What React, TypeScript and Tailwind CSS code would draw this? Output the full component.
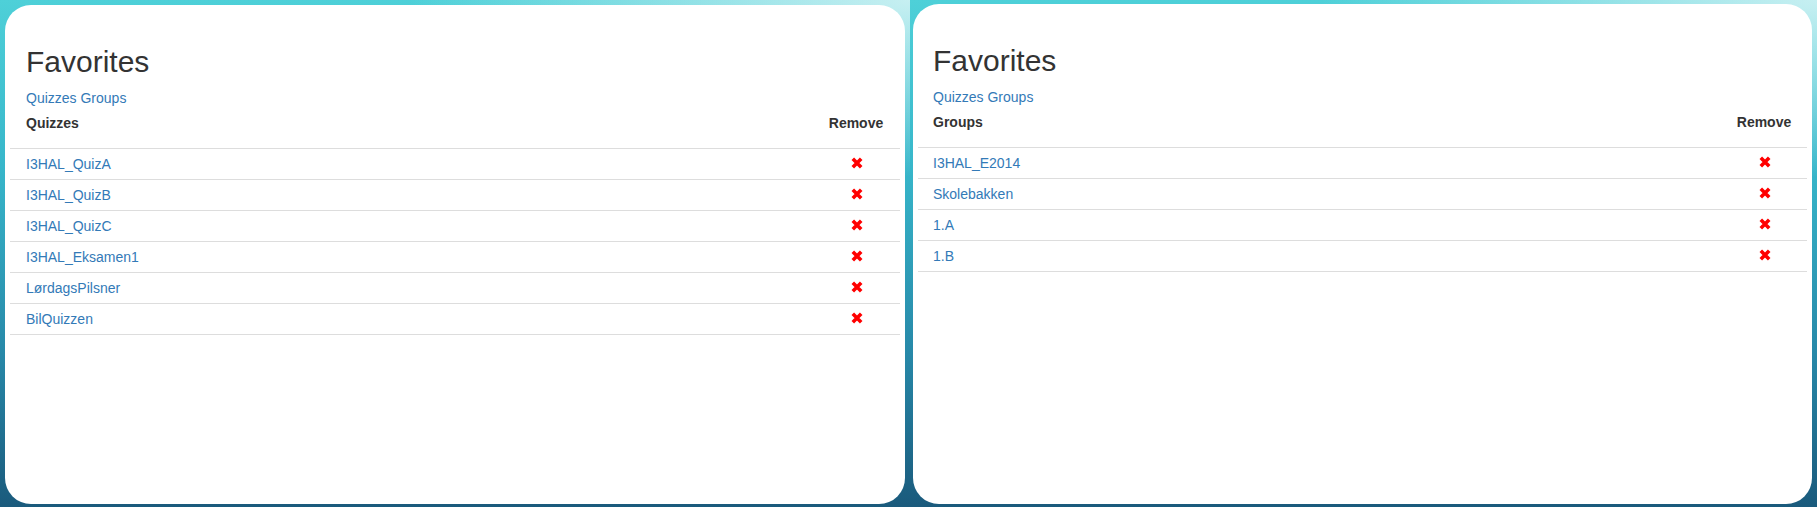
import React from "react";

const bgClass =
  "bg-[radial-gradient(ellipse_55%_35%_at_100%_0%,rgba(205,241,243,0.95)_0%,rgba(205,241,243,0)_100%),linear-gradient(to_bottom,#4ed0d8_0%,#37b6ca_33%,#2788a8_70%,#1a5a7c_100%)]";

function RemoveIcon() {
  return (
    <svg width="12" height="12" viewBox="0 0 12 12" className="block">
      <path d="M1.8 1.8 L10.2 10.2 M10.2 1.8 L1.8 10.2" stroke="#ff0000" strokeWidth="3.6" strokeLinecap="butt" fill="none" />
    </svg>
  );
}

type PanelProps = {
  heading: string;
  items: string[];
  wide: boolean;
};

function Panel({ heading, items, wide }: PanelProps) {
  const cellPad = wide ? "px-[16px]" : "px-[15px]";
  return (
    <div className="h-full rounded-[26px] bg-white px-[5px] pt-[40px]">
      <h2 className={`${cellPad} text-[30px] leading-[33px] font-normal text-[#333333]`}>Favorites</h2>
      <div className={`${cellPad} mt-[10px] text-[14px] leading-[20px] text-[#337ab7]`}>
        <a className="cursor-pointer">Quizzes</a> <a className="cursor-pointer">Groups</a>
      </div>
      <div className={`grid grid-cols-[1fr_56px] ${cellPad} pt-[5px] pb-[15px] border-b border-[#dddddd] text-[14px] leading-[20px] font-bold text-[#333333]`}>
        <div>{heading}</div>
        <div className="text-center">Remove</div>
      </div>
      {items.map((it) => (
        <div
          key={it}
          className={`grid grid-cols-[1fr_56px] ${cellPad} py-[5px] border-b border-[#dddddd] text-[14px] leading-[20px]`}
        >
          <a className="text-[#337ab7] cursor-pointer">{it}</a>
          <div className="flex justify-center items-start pt-[3px] pl-[2px]">
            <RemoveIcon />
          </div>
        </div>
      ))}
    </div>
  );
}

export default function App() {
  return (
    <div className="flex h-[507px] w-[1817px] overflow-hidden font-['Liberation_Sans',Arial,sans-serif]">
      <div className={`w-[910px] h-full pl-[5px] pr-[5px] pt-[5px] pb-[3px] ${bgClass}`}>
        <Panel
          heading="Quizzes"
          wide={true}
          items={["I3HAL_QuizA", "I3HAL_QuizB", "I3HAL_QuizC", "I3HAL_Eksamen1", "LørdagsPilsner", "BilQuizzen"]}
        />
      </div>
      <div className={`w-[907px] h-full pl-[3px] pr-[5px] pt-[4px] pb-[3px] ${bgClass}`}>
        <Panel heading="Groups" wide={false} items={["I3HAL_E2014", "Skolebakken", "1.A", "1.B"]} />
      </div>
    </div>
  );
}
